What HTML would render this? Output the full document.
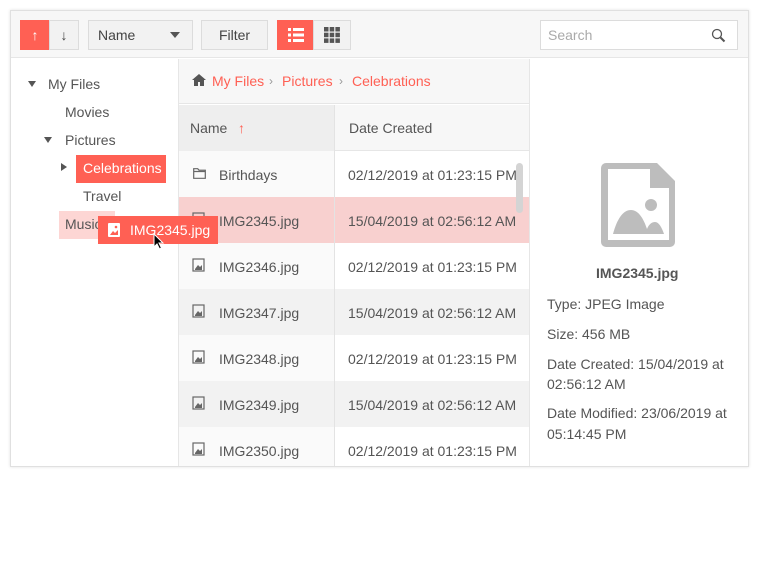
<!DOCTYPE html>
<html><head><meta charset="utf-8"><style>
*{box-sizing:border-box;margin:0;padding:0}
body{width:762px;height:569px;background:#fff;font-family:"Liberation Sans",sans-serif;position:relative;overflow:hidden;color:#555}
.abs{position:absolute}
.frame{left:10px;top:10px;width:739px;height:457px;border:1px solid #e0e0e0;box-shadow:0 0 3px rgba(0,0,0,.12);background:#fff}
.tb{left:11px;top:11px;width:737px;height:47px;background:#f7f7f7;border-bottom:1px solid #e6e6e6}
.btn{position:absolute;top:20px;height:30px;border:1px solid #dcdcdc;background:#f2f2f2;font-size:14px;color:#444;display:flex;align-items:center;justify-content:center}
.t{position:absolute;font-size:14px;white-space:nowrap}
.row{position:absolute;left:179px;width:350px;height:46px}
.row .n{position:absolute;left:40px;top:16px;font-size:14px;color:#555}
.row .d{position:absolute;left:169px;top:16px;font-size:14px;color:#555}
.row .nc{position:absolute;left:0;top:0;width:155px;height:46px}
.ico{position:absolute;left:14px;top:17px}
</style></head><body>
<div class="abs frame"></div>
<div class="abs tb"></div>
<div class="btn" style="left:20px;width:30px;background:#ff6054;border-color:#ff6054;color:#fff">&#8593;</div>
<div class="btn" style="left:49px;width:30px">&#8595;</div>
<div class="btn" style="left:88px;width:105px;justify-content:flex-start;padding-left:9px">Name<span style="position:absolute;right:12px;top:11px;border-left:5px solid transparent;border-right:5px solid transparent;border-top:6px solid #555"></span></div>
<div class="btn" style="left:201px;width:67px">Filter</div>
<div class="btn" style="left:277px;width:37px;background:#ff6054;border-color:#ff6054">
<svg width="16" height="14"><g fill="#fff"><rect x="0" y="0" width="3" height="3"/><rect x="5" y="0" width="11" height="3"/><rect x="0" y="5.5" width="3" height="3"/><rect x="5" y="5.5" width="11" height="3"/><rect x="0" y="11" width="3" height="3"/><rect x="5" y="11" width="11" height="3"/></g></svg></div>
<div class="btn" style="left:313px;width:38px">
<svg width="16" height="16"><g fill="#555"><rect x="0" y="0" width="4.5" height="4.5"/><rect x="5.7" y="0" width="4.5" height="4.5"/><rect x="11.4" y="0" width="4.5" height="4.5"/><rect x="0" y="5.7" width="4.5" height="4.5"/><rect x="5.7" y="5.7" width="4.5" height="4.5"/><rect x="11.4" y="5.7" width="4.5" height="4.5"/><rect x="0" y="11.4" width="4.5" height="4.5"/><rect x="5.7" y="11.4" width="4.5" height="4.5"/><rect x="11.4" y="11.4" width="4.5" height="4.5"/></g></svg></div>
<div class="abs" style="left:540px;top:20px;width:198px;height:30px;border:1px solid #dcdcdc;background:#fff"><span class="t" style="left:7px;top:6px;color:#aaa">Search</span>
<svg class="abs" style="left:170px;top:7px" width="16" height="16"><circle cx="6" cy="6" r="4.5" fill="none" stroke="#555" stroke-width="1.3"/><path d="M9.5 9.5l4 4" stroke="#555" stroke-width="2"/></svg></div>

<div class="abs" style="left:178px;top:59px;width:1px;height:407px;background:#e6e6e6"></div>
<span class="abs" style="left:28px;top:81px;border-left:4px solid transparent;border-right:4px solid transparent;border-top:6px solid #555"></span>
<span class="t" style="left:48px;top:76px">My Files</span>
<span class="t" style="left:65px;top:104px">Movies</span>
<span class="abs" style="left:44px;top:137px;border-left:4px solid transparent;border-right:4px solid transparent;border-top:6px solid #555"></span>
<span class="t" style="left:65px;top:132px">Pictures</span>
<span class="abs" style="left:61px;top:163px;border-top:4px solid transparent;border-bottom:4px solid transparent;border-left:6px solid #555"></span>
<div class="abs" style="left:76px;top:155px;width:90px;height:28px;background:#ff6054"></div>
<span class="t" style="left:83px;top:160px;color:#fff">Celebrations</span>
<span class="t" style="left:83px;top:188px">Travel</span>
<div class="abs" style="left:59px;top:211px;width:56px;height:28px;background:#fdd6d4"></div>
<span class="t" style="left:65px;top:216px">Music</span>

<div class="abs" style="left:179px;top:59px;width:350px;height:45px;background:#f7f7f7;border-bottom:1px solid #e6e6e6"></div>
<svg class="abs" style="left:192px;top:74px" width="14" height="12"><path d="M7 0L0 6h2v6h4V8h2v4h4V6h2z" fill="#555"/></svg>
<span class="t" style="left:212px;top:73px;color:#ff6054">My Files</span>
<span class="t" style="left:269px;top:74px;color:#999;font-size:12px">&#8250;</span>
<span class="t" style="left:282px;top:73px;color:#ff6054">Pictures</span>
<span class="t" style="left:339px;top:74px;color:#999;font-size:12px">&#8250;</span>
<span class="t" style="left:352px;top:73px;color:#ff6054">Celebrations</span>

<div class="abs" style="left:179px;top:105px;width:350px;height:46px;background:#f7f7f7;border-bottom:1px solid #e6e6e6"></div>
<div class="abs" style="left:179px;top:105px;width:155px;height:46px;background:#eee"></div>
<span class="t" style="left:190px;top:120px">Name</span>
<span class="t" style="left:238px;top:120px;color:#ff6054">&#8593;</span>
<span class="t" style="left:349px;top:120px">Date Created</span>

<div class="row" style="top:151px;background:#fff"><div class="nc" style="background:#fafafa"></div>
<svg class="ico" width="13" height="11" style="top:17px"><path d="M.7.7h4l1.3 1.5h6.3v8.1H.7z M.7 3.5h11.6" fill="none" stroke="#666" stroke-width="1.2"/></svg>
<span class="n">Birthdays</span><span class="d">02/12/2019 at 01:23:15 PM</span></div>
<div class="row" style="top:197px;background:#f8d0cf"><span class="n">IMG2345.jpg</span><span class="d">15/04/2019 at 02:56:12 AM</span></div>
<div class="row" style="top:243px;background:#fff"><div class="nc" style="background:#fafafa"></div><span class="n">IMG2346.jpg</span><span class="d">02/12/2019 at 01:23:15 PM</span></div>
<div class="row" style="top:289px;background:#f2f2f2"><span class="n">IMG2347.jpg</span><span class="d">15/04/2019 at 02:56:12 AM</span></div>
<div class="row" style="top:335px;background:#fff"><div class="nc" style="background:#fafafa"></div><span class="n">IMG2348.jpg</span><span class="d">02/12/2019 at 01:23:15 PM</span></div>
<div class="row" style="top:381px;background:#f2f2f2"><span class="n">IMG2349.jpg</span><span class="d">15/04/2019 at 02:56:12 AM</span></div>
<div class="row" style="top:427px;height:39px;background:#fff"><div class="nc" style="background:#fafafa;height:39px"></div><span class="n">IMG2350.jpg</span><span class="d">02/12/2019 at 01:23:15 PM</span></div>
<svg class="abs" width="14" height="300" style="left:192px;top:208px"><g fill="none" stroke="#666" stroke-width="1.2">
<rect x="1" y="5" width="11" height="12"/><rect x="1" y="51" width="11" height="12"/><rect x="1" y="97" width="11" height="12"/><rect x="1" y="143" width="11" height="12"/><rect x="1" y="189" width="11" height="12"/><rect x="1" y="235" width="11" height="12"/></g>
<g fill="#666"><path d="M3 61l3-4 2 2 2-2v5H3z"/><path d="M3 107l3-4 2 2 2-2v5H3z"/><path d="M3 153l3-4 2 2 2-2v5H3z"/><path d="M3 199l3-4 2 2 2-2v5H3z"/><path d="M3 245l3-4 2 2 2-2v5H3z"/></g></svg>
<div class="abs" style="left:334px;top:105px;width:1px;height:361px;background:#e3e3e3"></div>
<div class="abs" style="left:516px;top:163px;width:7px;height:50px;border-radius:4px;background:#d4d4d4"></div>
<div class="abs" style="left:529px;top:59px;width:1px;height:407px;background:#e6e6e6"></div>

<div class="abs" style="left:98px;top:216px;width:120px;height:28px;background:#ff6054"></div>
<svg class="abs" style="left:108px;top:223px" width="12" height="14"><rect x="0" y="0" width="12" height="14" rx="1" fill="#fff"/><path d="M2 12l3-4 2 2 3-3v5z" fill="#ff6054"/><circle cx="8" cy="4" r="1.3" fill="#ff6054"/></svg>
<span class="t" style="left:130px;top:222px;color:#fff">IMG2345.jpg</span>
<svg class="abs" style="left:153px;top:233px" width="12" height="17"><path d="M1 1v13l3-3 2.5 5 2-1-2.5-5h4z" fill="#000" stroke="#fff" stroke-width="1"/></svg>

<svg class="abs" style="left:601px;top:163px" width="74" height="84"><path d="M5 0h51l18 18v61a5 5 0 0 1-5 5H5a5 5 0 0 1-5-5V5a5 5 0 0 1 5-5z" fill="#bdbdbd"/><path d="M7 6h42v19h19v52H7z" fill="#fff"/><circle cx="50" cy="42" r="6" fill="#bdbdbd"/><path d="M12 71c4-15 10-24 18-24s13 10 16 19c2-5 5-7 8-7 4 0 7 6 9 12z" fill="#bdbdbd"/></svg>
<span class="t" style="left:596px;top:265px;font-weight:bold;color:#555;font-size:14px">IMG2345.jpg</span>
<span class="t" style="left:547px;top:296px">Type: JPEG Image</span>
<span class="t" style="left:547px;top:326px">Size: 456 MB</span>
<span class="t" style="left:547px;top:356px">Date Created: 15/04/2019 at</span>
<span class="t" style="left:547px;top:376px">02:56:12 AM</span>
<span class="t" style="left:547px;top:405px">Date Modified: 23/06/2019 at</span>
<span class="t" style="left:547px;top:426px">05:14:45 PM</span>
</body></html>
